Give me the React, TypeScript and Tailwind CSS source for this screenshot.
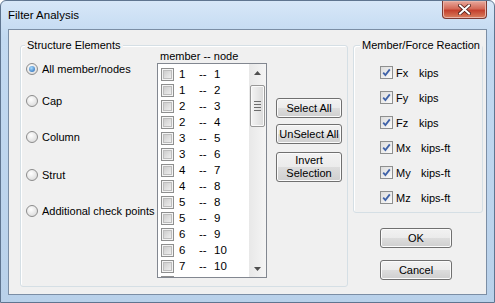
import React from "react";

const pairs: [number, number][] = [
  [1, 1], [1, 2], [2, 3], [2, 4], [3, 5], [3, 6], [4, 7],
  [4, 8], [5, 8], [5, 9], [6, 9], [6, 10], [7, 10],
];

const radios = [
  { label: "All member/nodes", mt: "mt-[15px]", on: true },
  { label: "Cap", mt: "mt-[16px]", on: false },
  { label: "Column", mt: "mt-[20px]", on: false },
  { label: "Strut", mt: "mt-[22px]", on: false },
  { label: "Additional check points", mt: "mt-[20px]", on: false },
];

const forces = [
  { name: "Fx", unit: "kips", w: "w-[23px]" },
  { name: "Fy", unit: "kips", w: "w-[23px]" },
  { name: "Fz", unit: "kips", w: "w-[23px]" },
  { name: "Mx", unit: "kips-ft", w: "w-[25px]" },
  { name: "My", unit: "kips-ft", w: "w-[25px]" },
  { name: "Mz", unit: "kips-ft", w: "w-[25px]" },
];

function Radio({ on }: { on: boolean }) {
  return (
    <span className="flex h-[12px] w-[12px] shrink-0 items-center justify-center rounded-full border border-[#8c8c8c] bg-[radial-gradient(circle_at_40%_35%,#ffffff,#d4d4d4)]">
      {on && (
        <span className="h-[6px] w-[6px] rounded-full bg-[radial-gradient(circle_at_40%_35%,#a8dcff,#1b5fb0)]" />
      )}
    </span>
  );
}

function ListBox() {
  return (
    <span className="flex h-[13px] w-[13px] shrink-0 items-center justify-center border border-[#8e8f8f] bg-[#f4f4f4]">
      <span className="h-[9px] w-[9px] border border-[#bdbdbd] bg-[linear-gradient(135deg,#cdcdcd,#eeeeee)]" />
    </span>
  );
}

function CheckedBox() {
  return (
    <span className="flex h-[13px] w-[13px] shrink-0 items-center justify-center border border-[#8e8f8f] bg-[linear-gradient(135deg,#dcdcdc,#fbfbfb)]">
      <svg width="9" height="9" viewBox="0 0 9 9">
        <path d="M1.2 4.6 L3.4 7 L7.8 1.4" fill="none" stroke="#3f62a8" strokeWidth="1.8" />
      </svg>
    </span>
  );
}

function Btn({ children, h = "h-[20px]", extra = "" }: { children: React.ReactNode; h?: string; extra?: string }) {
  return (
    <div
      className={`flex ${h} items-center justify-center rounded-[3px] border border-[#707070] bg-[linear-gradient(#f2f2f2_0%,#ebebeb_50%,#dddddd_50%,#cfcfcf_100%)] text-center leading-[13px] text-black shadow-[inset_0_0_0_1px_#fbfbfb] ${extra}`}
    >
      {children}
    </div>
  );
}

export default function App() {
  return (
    <div className="flex h-[303px] w-[495px] flex-col rounded-t-[6px] border border-[#5f7590] bg-[linear-gradient(#d7e7f8_0%,#c2d9f1_12%,#b9d1ea_100%)] px-[7px] pb-[7px] font-['Liberation_Sans',Arial,sans-serif] text-[11px] text-black">
      {/* Title bar */}
      <div className="flex h-[28px] items-start justify-between">
        <span className="mt-[7px] text-[11.5px] leading-[14px]">Filter Analysis</span>
        <div className="flex h-[18px] w-[45px] items-center justify-center rounded-b-[4px] border border-t-0 border-[#7b3a34] bg-[linear-gradient(#e9a99d_0%,#d46a58_45%,#c4402e_55%,#d9805f_100%)] shadow-[inset_0_0_0_1px_#eab4a8]">
          <svg width="13" height="11" viewBox="0 0 13 11">
            <path d="M2 1.5 L11 9.5 M11 1.5 L2 9.5" stroke="#4a1b16" strokeWidth="3.6" strokeLinecap="square" />
            <path d="M2 1.5 L11 9.5 M11 1.5 L2 9.5" stroke="#ffffff" strokeWidth="2" strokeLinecap="square" />
          </svg>
        </div>
      </div>

      {/* Client area */}
      <div className="flex h-[266px] w-[479px] gap-[5px] border border-[#7b8ea5] bg-[#f0f0f0] pl-[11px] pt-[15px]">
        {/* Structure Elements */}
        <div className="relative flex h-[242px] w-[328px] rounded-[3px] border border-[#d5dfe5] shadow-[inset_1px_1px_0_#ffffff]">
          <span className="absolute -top-[8px] left-[4px] bg-[#f0f0f0] px-[2px] leading-[14px]">Structure Elements</span>

          <div className="flex w-[136px] flex-col pl-[5px]">
            {radios.map((r) => (
              <div key={r.label} className={`flex h-[16px] items-center gap-[4px] ${r.mt}`}>
                <Radio on={r.on} />
                <span className="whitespace-nowrap leading-[14px]">{r.label}</span>
              </div>
            ))}
          </div>

          <div className="flex w-[110px] flex-col pt-[3px]">
            <span className="h-[14px] pl-[3px] leading-[14px]">member -- node</span>
            <div className="flex h-[215px] border border-[#828790] bg-white">
              <div className="flex-1 overflow-hidden pt-[2px]">
                {pairs.map(([m, n], i) => (
                  <div key={i} className="flex h-[16px] items-center pl-[3px] text-[11.5px] leading-[14px]">
                    <ListBox />
                    <span className="ml-[5px] w-[20px]">{m}</span>
                    <span className="w-[15px]">--</span>
                    <span>{n}</span>
                  </div>
                ))}
                <div className="flex h-[16px] items-center pl-[3px]">
                  <ListBox />
                </div>
              </div>
              <div className="flex w-[17px] flex-col bg-[linear-gradient(90deg,#e8e8e8,#f5f5f5)]">
                <div className="flex h-[17px] items-center justify-center">
                  <svg width="7" height="4" viewBox="0 0 7 4">
                    <path d="M0 4 L3.5 0 L7 4 Z" fill="#4f4f4f" />
                  </svg>
                </div>
                <div className="mx-[1px] mt-[4px] flex h-[42px] flex-col items-center justify-center gap-[2px] rounded-[2px] border border-[#989898] bg-[linear-gradient(90deg,#f4f4f4,#dadada)] shadow-[inset_0_0_0_1px_#fafafa]">
                  <span className="h-[1px] w-[7px] bg-[#6d6d6d]" />
                  <span className="h-[1px] w-[7px] bg-[#6d6d6d]" />
                  <span className="h-[1px] w-[7px] bg-[#6d6d6d]" />
                  <span className="h-[1px] w-[7px] bg-[#6d6d6d]" />
                </div>
                <div className="flex-1" />
                <div className="flex h-[17px] items-center justify-center">
                  <svg width="7" height="4" viewBox="0 0 7 4">
                    <path d="M0 0 L3.5 4 L7 0 Z" fill="#4f4f4f" />
                  </svg>
                </div>
              </div>
            </div>
          </div>

          <div className="ml-[9px] flex w-[66px] flex-col pt-[52px]">
            <Btn>Select All</Btn>
            <Btn extra="mt-[6px]">UnSelect All</Btn>
            <Btn h="h-[30px]" extra="mt-[8px]">
              Invert
              <br />
              Selection
            </Btn>
          </div>
        </div>

        {/* Member/Force Reaction */}
        <div className="flex w-[130px] flex-col">
          <div className="relative flex h-[168px] flex-col gap-[12px] rounded-[3px] border border-[#d5dfe5] pl-[26px] pt-[20px] shadow-[inset_1px_1px_0_#ffffff]">
            <span className="absolute -top-[8px] left-[6px] whitespace-nowrap bg-[#f0f0f0] px-[2px] leading-[14px]">Member/Force Reaction</span>
            {forces.map((f) => (
              <div key={f.name} className="flex h-[13px] items-center">
                <CheckedBox />
                <span className={`ml-[3px] ${f.w} leading-[14px]`}>{f.name}</span>
                <span className="mt-[1px] leading-[14px]">{f.unit}</span>
              </div>
            ))}
          </div>
          <div className="ml-[27px] mt-[15px] w-[72px]">
            <Btn extra="border-[#3c7fb1] shadow-[inset_0_0_0_1px_#9fdcfb]">OK</Btn>
            <Btn extra="mt-[12px]">Cancel</Btn>
          </div>
        </div>
      </div>
    </div>
  );
}
